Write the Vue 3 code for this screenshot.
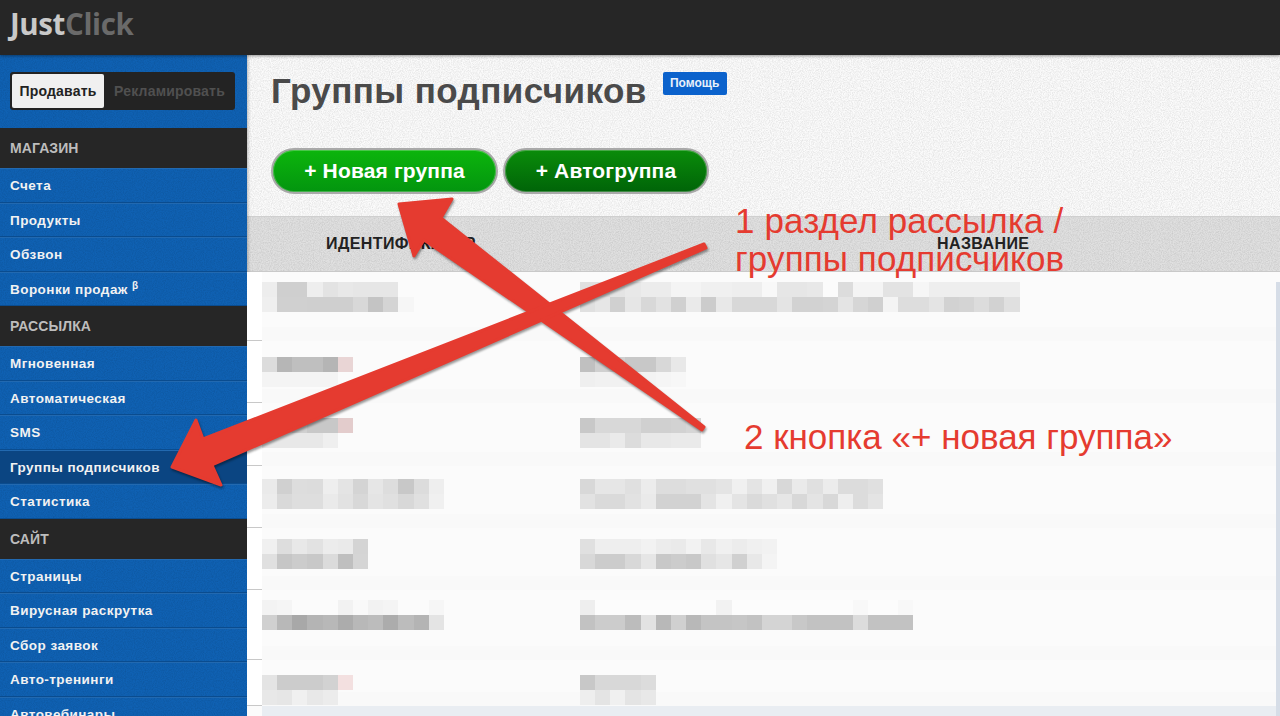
<script setup>
const menu = [
  { title: 'МАГАЗИН', items: [{ label: 'Счета' }, { label: 'Продукты' }, { label: 'Обзвон' }, { label: 'Воронки продаж', beta: true }] },
  { title: 'РАССЫЛКА', items: [{ label: 'Мгновенная' }, { label: 'Автоматическая' }, { label: 'SMS' }, { label: 'Группы подписчиков', active: true }, { label: 'Статистика' }] },
  { title: 'САЙТ', items: [{ label: 'Страницы' }, { label: 'Вирусная раскрутка' }, { label: 'Сбор заявок' }, { label: 'Авто-тренинги' }, { label: 'Автовебинары' }] }
]

// размытые строки таблицы: цвета пикселей двух рядов в каждой колонке
const rows = [
  { h: 69, pad: 10,
    left: ['ed cf cf ee e3 e8 e6 e6 e6', 'ef d0 d0 cf cf cf d8 c4 d4 f6'],
    right: ['e0 e0 e4 e8 ec ec f4 f4 f0 f0 ee ee f8 e6 e6 e8 fb dc f4 f4 e3 e3 f6 ee ee ee ee ee ee', 'e0 e6 d0 e6 d8 e2 d0 ea cc e8 d8 d8 d8 e4 d2 d2 d4 e4 d6 d0 f4 dd dd e4 d2 d4 dc d2 e0'] },
  { h: 62, pad: 16,
    left: ['dc b6 bf bf b5 e9d5d5', 'f4 f4 f4 f4 f4'],
    right: ['c0 d0 d0 c8 c8 d8 e8', 'ef f1 f1 f1 f3 f5 f7'] },
  { h: 63, pad: 15,
    left: ['e0 d8 d0 c8 c8 e3cccc', 'e8 e8 e8 e8 ef'],
    right: ['c8 d8 d8 d8 d0 d0 d2 d6', 'e4 e4 ea dc e8 e8 ea ea'] },
  { h: 62, pad: 13,
    left: ['ea d0 dd dc ee e4 d4 e6 dd c8 dc ee', 'ec d9 de de ea e2 d8 e4 e0 d8 e0 f0'],
    right: ['d8 e6 e6 e0 ec dd dd e0 e0 e4 f0 e4 f0 d8 ea e0 ec dc dc e0', 'e2 da da e2 ea d2 d2 d2 e4 f0 e4 da e0 e6 d8 e4 d8 ee dc e4'] },
  { h: 62, pad: 11,
    left: ['f0 dd e8 e2 ec ea d4', 'e0 c6 cc c8 db bf d5'],
    right: ['e0 ee ee ee f2 ec ea f2 e8 f0 ec f0 f2', 'd8 cc cc d8 e6 c8 cc c8 e0 e6 d0 e8 f4'] },
  { h: 70, pad: 10,
    left: ['f3 f5 fb fb fb f2 f9 f2 f4 fb fb f6', 'd0 b8 a8 b4 b8 ac b8 bc ac bc b4 e4'],
    right: ['ee fc fc fc fc fc fc fc fc f2 fc fc fc fc fc fc fc fc f8 fc fc f8', 'c2 cc cc bc e2 b8 d0 b8 c4 c4 c6 c2 d4 d4 c8 c2 c2 c2 dc c2 c2 c2'] },
  { h: 46, pad: 15,
    left: ['e4 cc cc cc d2 f3e0e0', 'e8 e6 f0 e8 ec'],
    right: ['c8 d8 d8 d8 dc', 'ee e4 f0 e4 e8'] }
]

const px = (line) => line.split(' ').map((c) => '#' + (c.length === 2 ? c + c + c : c))
</script>

<template>
  <div class="page">
    <header class="topbar">
      <div class="logo"><span class="just">Just</span><span class="click">Click</span></div>
    </header>

    <div class="layout">
      <aside class="sidebar">
        <div class="switch-wrap">
          <div class="switch">
            <div class="switch-on">Продавать</div>
            <div class="switch-off">Рекламировать</div>
          </div>
        </div>
        <section v-for="group in menu" :key="group.title">
          <div class="group-title">{{ group.title }}</div>
          <a v-for="item in group.items" :key="item.label" class="menu-item" :class="{ active: item.active }">
            {{ item.label }}<sup v-if="item.beta" class="beta">β</sup>
          </a>
        </section>
      </aside>

      <main class="main">
        <div class="head">
          <h1>Группы подписчиков</h1>
          <span class="help">Помощь</span>
        </div>
        <div class="actions">
          <button class="btn btn-new">+ Новая группа</button>
          <button class="btn btn-auto">+ Автогруппа</button>
        </div>
        <div class="thead">
          <div class="th th-id">ИДЕНТИФИКАТОР</div>
          <div class="th">НАЗВАНИЕ</div>
        </div>
        <div class="tbody">
          <div v-for="(row, i) in rows" :key="i" class="row" :style="{ height: row.h + 'px' }">
            <div class="gutter"></div>
            <div class="cell cell-id" :style="{ paddingTop: row.pad + 'px' }">
              <div v-for="(line, j) in row.left" :key="j" class="px-line">
                <i v-for="(c, k) in px(line)" :key="k" :style="{ background: c }"></i>
              </div>
            </div>
            <div class="cell" :style="{ paddingTop: row.pad + 'px' }">
              <div v-for="(line, j) in row.right" :key="j" class="px-line">
                <i v-for="(c, k) in px(line)" :key="k" :style="{ background: c }"></i>
              </div>
            </div>
          </div>
          <div class="row-end"></div>
        </div>
      </main>
    </div>

    <!-- пометки поверх скриншота -->
    <svg class="arrows" width="1280" height="716" viewBox="0 0 1280 716">
      <polygon points="399,204 452,199 441,218 704,427 702,430 424,240 414,256" />
      <polygon points="172,467 196,420 203,439 704,244 706,248 212,465 221,485" />
    </svg>
    <div class="note note-1">1 раздел рассылка /<br>группы подписчиков</div>
    <div class="note note-2">2 кнопка «+ новая группа»</div>
  </div>
</template>

<style scoped>
.page {
  --grain: url("data:image/svg+xml,%3Csvg xmlns='http://www.w3.org/2000/svg' width='200' height='200'%3E%3Cfilter id='n'%3E%3CfeTurbulence type='fractalNoise' baseFrequency='.9' numOctaves='2' stitchTiles='stitch'/%3E%3CfeColorMatrix values='0 0 0 0 0 0 0 0 0 0 0 0 0 0 0 0 0 0 .18 -.06'/%3E%3C/filter%3E%3Crect width='200' height='200' filter='url(%23n)'/%3E%3C/svg%3E");
  position: relative;
  width: 1280px;
  height: 716px;
  overflow: hidden;
  font-family: "Liberation Sans", Arial, sans-serif;
  background: #fbfbfb;
}

.topbar {
  height: 55px;
  background: #262626;
  box-shadow: 0 1px 3px rgba(0, 0, 0, 0.4);
  position: relative;
  z-index: 2;
  display: flex;
  align-items: center;
  padding-left: 10px;
}
.logo {
  font-family: "Open Sans", sans-serif;
  font-weight: 700;
  font-size: 29.5px;
  letter-spacing: -0.4px;
  margin-top: -9px;
}
.just { color: #c9c9c9; }
.click { color: #6a6a6a; }

.layout {
  display: flex;
  height: 661px;
}

.sidebar {
  width: 247px;
  flex-shrink: 0;
  background: var(--grain), #0f61b3;
  box-shadow: 1px 0 3px rgba(0, 0, 0, 0.25);
  position: relative;
}
.switch-wrap {
  height: 73px;
  padding: 17px 12px 0 10px;
  box-sizing: border-box;
}
.switch {
  display: flex;
  height: 38px;
  background: #232323;
  border-radius: 3px;
  padding: 2px 0 2px 2px;
  box-sizing: border-box;
  font-size: 14px;
  font-weight: 700;
  letter-spacing: 0.2px;
}
.switch-on {
  width: 92px;
  background: #f0f0f0;
  color: #222;
  border-radius: 2px;
  display: flex;
  align-items: center;
  justify-content: center;
}
.switch-off {
  flex: 1;
  color: #505050;
  display: flex;
  align-items: center;
  justify-content: center;
}

.group-title {
  height: 40px;
  box-sizing: border-box;
  background: #262626;
  color: #bdbdbd;
  font-size: 14px;
  font-weight: 700;
  line-height: 40px;
  padding-left: 10px;
  letter-spacing: 0.1px;
}
.menu-item {
  display: block;
  height: 34.5px;
  box-sizing: border-box;
  line-height: 33px;
  padding-left: 10px;
  color: #f2f2f2;
  font-size: 13.5px;
  font-weight: 700;
  letter-spacing: 0.45px;
  border-top: 1px solid #2269b0;
  border-bottom: 1px solid #0a4c8f;
}
.menu-item.active {
  background: #0b4582;
}
.beta {
  font-size: 10px;
  line-height: 0;
  margin-left: 4px;
  vertical-align: 5px;
}

.main {
  flex: 1;
  min-width: 0;
  background: var(--grain);
}
.head {
  display: flex;
  align-items: flex-start;
  height: 93px;
  padding: 16px 0 0 24px;
  box-sizing: border-box;
}
h1 {
  margin: 0;
  font-size: 35px;
  line-height: 40px;
  font-weight: 700;
  color: #4a4a4a;
  letter-spacing: 0.42px;
}
.help {
  margin: 1px 0 0 16px;
  width: 64px;
  height: 23px;
  line-height: 23px;
  text-align: center;
  background: #0b62cc;
  border-radius: 2px;
  color: #e8f0fa;
  font-size: 12px;
  font-weight: 700;
}

.actions {
  display: flex;
  gap: 5px;
  height: 68px;
  padding-left: 24px;
}
.btn {
  height: 46px;
  border: 2px solid #a9a9a9;
  border-radius: 23px;
  box-shadow: inset 0 0 0 1px rgba(255, 255, 255, 0.25);
  color: #fff;
  font-family: inherit;
  font-size: 21px;
  font-weight: 700;
  letter-spacing: 0.15px;
  padding: 0;
}
.btn-new {
  width: 227px;
  background: linear-gradient(#0cb50c, #03950f);
}
.btn-auto {
  width: 206px;
  background: linear-gradient(#0a8c0a, #006408);
}

.thead {
  display: grid;
  grid-template-columns: 690px 1fr;
  align-items: center;
  height: 56px;
  box-sizing: border-box;
  background: var(--grain), #e0e0e0;
  border-top: 1px solid #cfcfcf;
  border-bottom: 1px solid #c9c9c9;
}
.th {
  font-size: 16px;
  font-weight: 700;
  color: #222;
  letter-spacing: 0.4px;
}
.th-id {
  padding-left: 79px;
}

.tbody {
  background: #fbfbfb;
  height: 445px;
  position: relative;
  box-sizing: border-box;
}
.tbody::after {
  content: "";
  position: absolute;
  right: 0;
  top: 10px;
  bottom: 0;
  width: 4px;
  background: #d6dde7;
}
.row {
  display: grid;
  grid-template-columns: 15px 318px 1fr;
  box-sizing: border-box;
}
.gutter {
  background: #fff;
  border-bottom: 1px solid #c8c8c8;
}
.cell {
  background: linear-gradient(#fbfbfb calc(100% - 14px), #f9f9f9 calc(100% - 14px));
  min-width: 0;
}
.px-line {
  display: flex;
  height: 15px;
  filter: blur(0.4px);
}
.px-line i {
  width: 15.17px;
  height: 15px;
}
.row-end {
  margin-left: 15px;
  height: 10px;
  background: #e9edf2;
}

.arrows {
  position: absolute;
  left: 0;
  top: 0;
  pointer-events: none;
  filter: drop-shadow(1px 2px 1px rgba(0, 0, 0, 0.4));
}
.arrows polygon {
  fill: #e53b30;
  stroke: #e53b30;
  stroke-width: 3;
  stroke-linejoin: round;
}
.note {
  position: absolute;
  color: #e53b30;
  font-size: 35px;
  line-height: 38px;
  white-space: nowrap;
}
.note-1 {
  left: 735px;
  top: 202px;
  letter-spacing: 0.1px;
}
.note-2 {
  left: 744px;
  top: 418px;
}
</style>

<style>
html, body {
  margin: 0;
  overflow: hidden;
}
</style>
